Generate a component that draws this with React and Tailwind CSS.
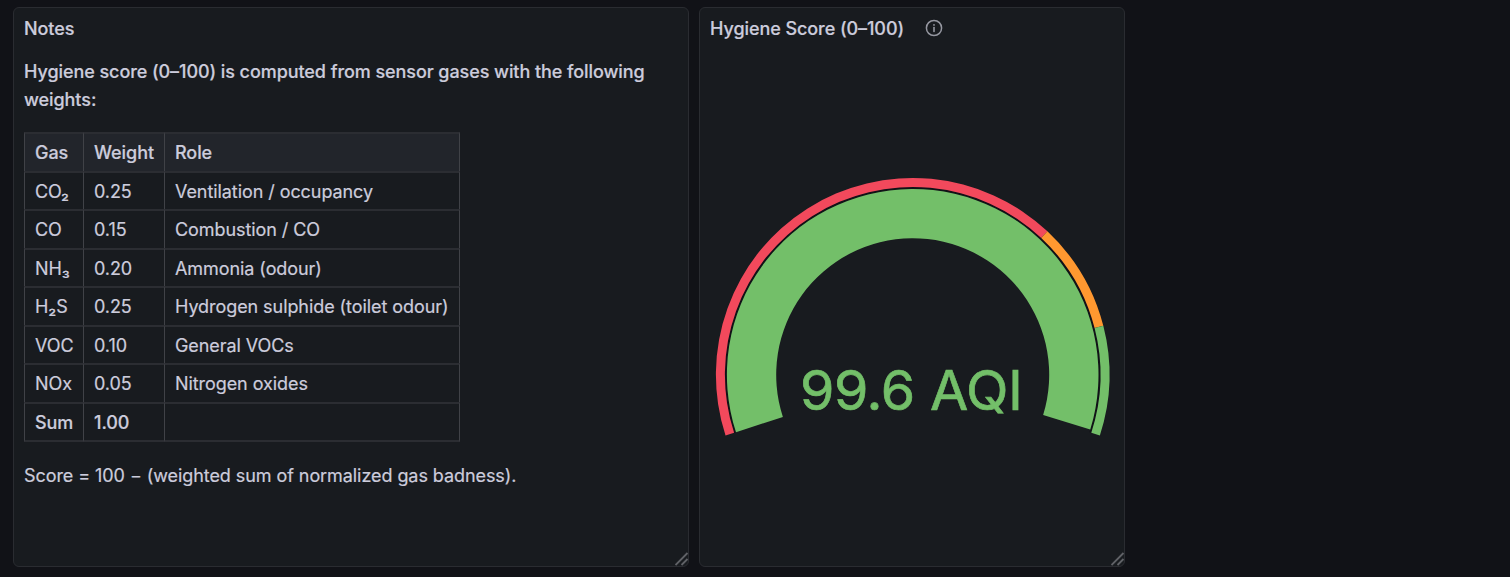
import clsx from 'clsx';

const GASES = [
  { gas: 'CO₂', weight: '0.25', role: 'Ventilation / occupancy', height: 'h-[38px]' },
  { gas: 'CO', weight: '0.15', role: 'Combustion / CO', height: 'h-[39px]', tall: true },
  { gas: 'NH₃', weight: '0.20', role: 'Ammonia (odour)', height: 'h-[38px]' },
  { gas: 'H₂S', weight: '0.25', role: 'Hydrogen sulphide (toilet odour)', height: 'h-[39px]', tall: true },
  { gas: 'VOC', weight: '0.10', role: 'General VOCs', height: 'h-[38px]' },
  { gas: 'NOx', weight: '0.05', role: 'Nitrogen oxides', height: 'h-[39px]', tall: true },
];

const THRESHOLDS = [
  { from: 0, to: 70, color: '#f2495c' },
  { from: 70, to: 85, color: '#ff9830' },
  { from: 85, to: 100, color: '#73bf69' },
];

const CX = 212.7;
const CY = 204.8;

function point(r, value) {
  // the gauge sweeps 216 degrees, starting 18 degrees below the horizontal
  const a = ((198 - value * 2.16) * Math.PI) / 180;
  return `${(CX + r * Math.cos(a)).toFixed(2)} ${(CY - r * Math.sin(a)).toFixed(2)}`;
}

function arc(inner, outer, from, to) {
  const large = (to - from) * 2.16 > 180 ? 1 : 0;
  return `M${point(outer, from)} A${outer} ${outer} 0 ${large} 1 ${point(outer, to)} L${point(inner, to)} A${inner} ${inner} 0 ${large} 0 ${point(inner, from)} Z`;
}

function Gauge({ value }) {
  return (
    <svg width="424" height="300" viewBox="0 0 424 300" className="block">
      <path d={arc(185.8, 187.8, 0, 100)} fill="#111217" />
      <path d={arc(136.5, 185.8, 0, value)} fill="#73bf69" />
      {THRESHOLDS.map(t => (
        <path key={t.from} d={arc(187.8, 196.8, t.from, t.to)} fill={t.color} />
      ))}
      <text
        x="211.2"
        y="239.5"
        textAnchor="middle"
        fill="#73bf69"
        stroke="#73bf69"
        strokeWidth="0.7"
        fontSize="55.5"
        className="tracking-[-0.4px] [-webkit-text-stroke:0.7px_#73bf69]"
      >
        {value} AQI
      </text>
    </svg>
  );
}

function Panel({ title, info, className, children }) {
  return (
    <section className={clsx('relative h-[560px] rounded-md border border-[#2a2c31] bg-[#181b1f]', className)}>
      <header className="flex h-[42px] items-center px-2.5 pb-0.5">
        <h2 className="text-[18px] font-medium">{title}</h2>
        {info && (
          <svg width="18" height="18" viewBox="0 0 18 18" fill="none" stroke="#9597a0" className="ml-[21px]">
            <circle cx="9" cy="9" r="7.6" strokeWidth="1.5" />
            <path d="M9 8.6v3.8" strokeWidth="1.6" strokeLinecap="round" />
            <circle cx="9" cy="5.9" r="0.9" fill="#9597a0" stroke="none" />
          </svg>
        )}
      </header>
      {children}
      {/* Resize handle */}
      <svg width="14" height="14" viewBox="0 0 14 14" className="absolute -right-px bottom-0" stroke="#606267" strokeWidth="1.8">
        <path d="M0.5 13 L12.5 1 M6.5 13 L12.5 7" />
      </svg>
    </section>
  );
}

function Cell({ children, last, bottom, strong, tall }) {
  return (
    <td
      className={clsx(
        'border-t-2 border-l border-t-[#2b2d32] border-l-[#404247] p-0 pl-2.5 leading-none',
        !tall && 'pt-0.5',
        last && 'border-r border-r-[#404247]',
        bottom && 'border-b-2 border-b-[#2b2d32]',
        strong && 'font-medium'
      )}
    >
      {children}
    </td>
  );
}

export default function App() {
  return (
    <main className="flex h-[577px] gap-2.5 overflow-hidden bg-[#111217] pt-[7px] pl-[13px] font-['Inter',sans-serif] text-[18px] tracking-[-0.07px] text-[#ccccdc] [-webkit-text-stroke:0.2px]">
      <Panel title="Notes" className="w-[676px]">
        <div className="px-2.5 pt-2">
          <p className="w-[640px] leading-7 font-medium">
            Hygiene score (0–100) is computed from sensor gases with the following weights:
          </p>
          <table className="mt-[18px] w-[436px] table-fixed border-separate border-spacing-0">
            <colgroup>
              <col className="w-[59px]" />
              <col className="w-[81px]" />
              <col className="w-[296px]" />
            </colgroup>
            <tbody>
              <tr className="h-[39px] bg-[#22252b]">
                <Cell strong tall>Gas</Cell>
                <Cell strong tall>Weight</Cell>
                <Cell strong tall last>Role</Cell>
              </tr>
              {GASES.map(g => (
                <tr key={g.gas} className={g.height}>
                  <Cell tall={g.tall}>{g.gas}</Cell>
                  <Cell tall={g.tall}>{g.weight}</Cell>
                  <Cell tall={g.tall} last>{g.role}</Cell>
                </tr>
              ))}
              <tr className="h-[40px]">
                <Cell bottom strong>Sum</Cell>
                <Cell bottom strong>1.00</Cell>
                <Cell bottom last />
              </tr>
            </tbody>
          </table>
          <p className="mt-5 leading-7">Score = 100 − (weighted sum of normalized gas badness).</p>
        </div>
      </Panel>

      <Panel title="Hygiene Score (0–100)" info className="w-[426px]">
        <div className="pt-[120px]">
          <Gauge value={99.6} />
        </div>
      </Panel>
    </main>
  );
}
